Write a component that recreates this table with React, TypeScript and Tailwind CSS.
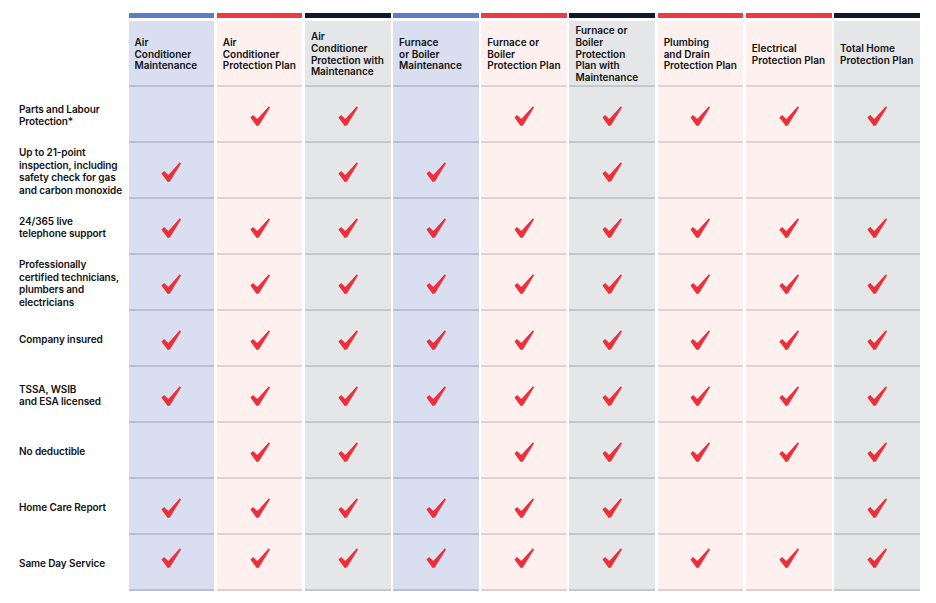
import React from "react";

type Kind = "b" | "p" | "g";
const kinds: Kind[] = ["b", "p", "g", "b", "p", "g", "p", "p", "g"];

const bg: Record<Kind, string> = {
  b: "bg-[#d9def0] border-[#b9bfd8]",
  p: "bg-[#fdf0ee] border-[#ddd2d1]",
  g: "bg-[#e5e6e8] border-[#c6c7ca]",
};
const bars = [
  "bg-[#5b7fc6]",
  "bg-[#ee3a44]",
  "bg-[#0e1a2c]",
  "bg-[#5b7fc6]",
  "bg-[#ee3a44]",
  "bg-[#0e1a2c]",
  "bg-[#ee3a44]",
  "bg-[#ee3a44]",
  "bg-[#0e1a2c]",
];

const headers: string[][] = [
  ["Air", "Conditioner", "Maintenance"],
  ["Air", "Conditioner", "Protection Plan"],
  ["Air", "Conditioner", "Protection with", "Maintenance"],
  ["Furnace", "or Boiler", "Maintenance"],
  ["Furnace or", "Boiler", "Protection Plan"],
  ["Furnace or", "Boiler", "Protection", "Plan with", "Maintenance"],
  ["Plumbing", "and Drain", "Protection Plan"],
  ["Electrical", "Protection Plan"],
  ["Total Home", "Protection Plan"],
];

const rows: { label: string[]; checks: number[] }[] = [
  { label: ["Parts and Labour", "Protection*"], checks: [0, 1, 1, 0, 1, 1, 1, 1, 1] },
  {
    label: ["Up to 21-point", "inspection, including", "safety check for gas", "and carbon monoxide"],
    checks: [1, 0, 1, 1, 0, 1, 0, 0, 0],
  },
  { label: ["24/365 live", "telephone support"], checks: [1, 1, 1, 1, 1, 1, 1, 1, 1] },
  {
    label: ["Professionally", "certified technicians,", "plumbers and", "electricians"],
    checks: [1, 1, 1, 1, 1, 1, 1, 1, 1],
  },
  { label: ["Company insured"], checks: [1, 1, 1, 1, 1, 1, 1, 1, 1] },
  { label: ["TSSA, WSIB", "and ESA licensed"], checks: [1, 1, 1, 1, 1, 1, 1, 1, 1] },
  { label: ["No deductible"], checks: [0, 1, 1, 0, 1, 1, 1, 1, 1] },
  { label: ["Home Care Report"], checks: [1, 1, 1, 1, 1, 1, 0, 0, 1] },
  { label: ["Same Day Service"], checks: [1, 1, 1, 1, 1, 1, 1, 1, 1] },
];

function Check() {
  return (
    <svg width="20" height="20" viewBox="0 0 20 20" aria-hidden="true">
      <polygon
        points="0.4,11.6 3.1,9.1 7.3,13.1 18.9,0.3 20,1.4 8.9,19.4 6.7,20"
        fill="#ec2f3b"
      />
    </svg>
  );
}

export default function App() {
  return (
    <div
      className="w-[936px] h-[603px] bg-white pt-[13px] text-[#111111]"
      style={{ fontFamily: "Inter, 'Liberation Sans', sans-serif" }}
    >
      <div className="grid grid-cols-[126px_repeat(9,85.7px)] gap-x-[2.5px]">
        <div />
        {bars.map((c, i) => (
          <div key={"bar" + i} className={`h-[4.5px] mb-[3.5px] ${c}`} />
        ))}

        <div />
        {headers.map((h, i) => (
          <div
            key={"h" + i}
            className={`h-[66px] border-b-2 flex items-center pl-[6px] pr-[4px] pt-[3px] ${bg[kinds[i]]}`}
          >
            <div className="text-[10px] leading-[11.8px] font-semibold">
              {h.map((l, j) => (
                <div key={j} className="whitespace-nowrap">
                  {l}
                </div>
              ))}
            </div>
          </div>
        ))}

        {rows.map((r, ri) => (
          <React.Fragment key={"r" + ri}>
            <div className="h-[56px] flex items-center pl-[19px]">
              <div className="text-[10px] leading-[12.5px] font-semibold tracking-[-0.1px]">
                {r.label.map((l, j) => (
                  <div key={j} className="whitespace-nowrap">
                    {l}
                  </div>
                ))}
              </div>
            </div>
            {r.checks.map((c, ci) => (
              <div
                key={ci}
                className={`h-[56px] border-b-2 flex items-center justify-center ${bg[kinds[ci]]}`}
              >
                {c ? (
                  <div className={ri === 8 ? "-translate-y-[4px]" : "translate-y-[2px]"}>
                    <Check />
                  </div>
                ) : null}
              </div>
            ))}
          </React.Fragment>
        ))}
      </div>
    </div>
  );
}
